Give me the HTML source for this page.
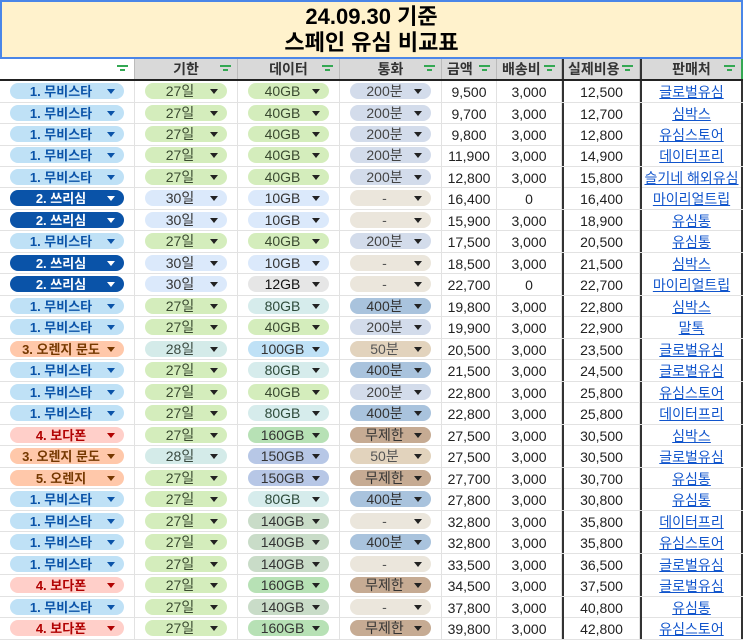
<!DOCTYPE html>
<html><head><meta charset="utf-8"><style>
*{margin:0;padding:0;box-sizing:border-box}
body{width:743px;height:639px;overflow:hidden;background:#fff;font-family:"Liberation Sans","Noto Sans CJK KR",sans-serif;position:relative;color:#222}
.title{position:absolute;left:0;top:0;width:743px;height:59px;background:#fff2cc;border:2px solid #4a86e8;text-align:center;font-weight:bold;font-size:22px;line-height:26px;padding-top:2px;color:#000}
.hd{position:absolute;top:59px;left:0;width:743px;height:22px;border-bottom:2px solid #222}
.hd div{position:absolute;top:0;height:20px;line-height:20px;text-align:center;font-weight:bold;font-size:14px;color:#333;background:#d9d9d9;border-right:1px solid #bbb}
.f{position:absolute;right:6px;top:6px;width:11px;height:9px}
.f:before,.f:after{content:"";position:absolute;left:0;right:0;height:1.5px;background:#34a853}
.f:before{top:0}.f:after{top:4px;left:3px;right:3px}
.r{position:absolute;left:0;width:743px;height:21.5px;border-bottom:1px solid #e2e2e2}
.c{position:absolute;top:0;height:21px;line-height:22px;text-align:center;font-size:14px;border-right:1px solid #e2e2e2}
.a{left:0;width:135px}.b{left:135px;width:103px}.d{left:238px;width:102px}.e{left:340px;width:102px}
.g{left:442px;width:55px}.h{left:497px;width:65px}.i{left:562px;width:78px;border-left:2px solid #333}.j{left:640px;width:103px;border-left:2px solid #333;border-right:2px solid #333}
.p{position:absolute;top:2px;height:16px;line-height:17px;border-radius:8px;text-align:center;padding-right:12px}
.a .p{left:10px;right:10px;font-weight:bold;font-size:13px}
.b .p,.d .p,.e .p{left:10px;right:10px}
.p:after{content:"";position:absolute;right:9px;top:6px;border-left:4px solid transparent;border-right:4px solid transparent;border-top:5px solid #222}
.m{background:#bfe1f6;color:#0a53a8}.m:after{border-top-color:#0a53a8}
.s{background:#0a53a8;color:#fff}.s:after{border-top-color:#fff}
.o{background:#ffc8aa;color:#753800}.o:after{border-top-color:#753800}
.v{background:#ffcfc9;color:#b10202}.v:after{border-top-color:#b10202}
.d27{background:#d4edbc;color:#3a4a30}.d28{background:#d4ebe9;color:#3a4a40}.d30{background:#dbe9fb;color:#333}
.g40{background:#d4edbc;color:#3a4a30}.g10{background:#dbe9fb;color:#333}.g12{background:#e6e6e6;color:#111}.g80{background:#d6ecec;color:#2d4a3a}.g100{background:#bfe1f6;color:#333}.g150{background:#b7c7e6;color:#333}.g160{background:#b7e1b5;color:#333}.g140{background:#c9dcc8;color:#333}
.t200{background:#d3dceb;color:#444}.tn{background:#ebe6dc;color:#555}.t400{background:#a9c3dd;color:#333}.t50{background:#e2d3bd;color:#555}.tu{background:#c6ab93;color:#333}
.j a{color:#1155cc;text-decoration:underline}
</style></head><body>
<div class="title">24.09.30 기준<br>스페인 유심 비교표</div>
<div class="hd">
<div style="left:0;width:135px;background:#fff"><span class="f"></span></div>
<div style="left:135px;width:103px">기한<span class="f"></span></div>
<div style="left:238px;width:102px">데이터<span class="f"></span></div>
<div style="left:340px;width:102px">통화<span class="f"></span></div>
<div style="left:442px;width:55px;text-align:left;padding-left:5px">금액<span class="f"></span></div>
<div style="left:497px;width:65px;text-align:left;padding-left:5px">배송비<span class="f"></span></div>
<div style="left:562px;width:78px;border-left:2px solid #333;text-align:left;padding-left:4px">실제비용<span class="f"></span></div>
<div style="left:640px;width:103px;border-left:2px solid #333;border-right:2px solid #34a853">판매처<span class="f"></span></div>
</div>

<div class="r" style="top:81px"><div class="c a"><div class="p m">1. 무비스타</div></div><div class="c b"><div class="p d27">27일</div></div><div class="c d"><div class="p g40">40GB</div></div><div class="c e"><div class="p t200">200분</div></div><div class="c g">9,500</div><div class="c h">3,000</div><div class="c i">12,500</div><div class="c j"><a>글로벌유심</a></div></div>
<div class="r" style="top:102.5px"><div class="c a"><div class="p m">1. 무비스타</div></div><div class="c b"><div class="p d27">27일</div></div><div class="c d"><div class="p g40">40GB</div></div><div class="c e"><div class="p t200">200분</div></div><div class="c g">9,700</div><div class="c h">3,000</div><div class="c i">12,700</div><div class="c j"><a>심박스</a></div></div>
<div class="r" style="top:124px"><div class="c a"><div class="p m">1. 무비스타</div></div><div class="c b"><div class="p d27">27일</div></div><div class="c d"><div class="p g40">40GB</div></div><div class="c e"><div class="p t200">200분</div></div><div class="c g">9,800</div><div class="c h">3,000</div><div class="c i">12,800</div><div class="c j"><a>유심스토어</a></div></div>
<div class="r" style="top:145.4px"><div class="c a"><div class="p m">1. 무비스타</div></div><div class="c b"><div class="p d27">27일</div></div><div class="c d"><div class="p g40">40GB</div></div><div class="c e"><div class="p t200">200분</div></div><div class="c g">11,900</div><div class="c h">3,000</div><div class="c i">14,900</div><div class="c j"><a>데이터프리</a></div></div>
<div class="r" style="top:166.9px"><div class="c a"><div class="p m">1. 무비스타</div></div><div class="c b"><div class="p d27">27일</div></div><div class="c d"><div class="p g40">40GB</div></div><div class="c e"><div class="p t200">200분</div></div><div class="c g">12,800</div><div class="c h">3,000</div><div class="c i">15,800</div><div class="c j"><a>슬기네 해외유심</a></div></div>
<div class="r" style="top:188.4px"><div class="c a"><div class="p s">2. 쓰리심</div></div><div class="c b"><div class="p d30">30일</div></div><div class="c d"><div class="p g10">10GB</div></div><div class="c e"><div class="p tn">-</div></div><div class="c g">16,400</div><div class="c h">0</div><div class="c i">16,400</div><div class="c j"><a>마이리얼트립</a></div></div>
<div class="r" style="top:209.9px"><div class="c a"><div class="p s">2. 쓰리심</div></div><div class="c b"><div class="p d30">30일</div></div><div class="c d"><div class="p g10">10GB</div></div><div class="c e"><div class="p tn">-</div></div><div class="c g">15,900</div><div class="c h">3,000</div><div class="c i">18,900</div><div class="c j"><a>유심통</a></div></div>
<div class="r" style="top:231.4px"><div class="c a"><div class="p m">1. 무비스타</div></div><div class="c b"><div class="p d27">27일</div></div><div class="c d"><div class="p g40">40GB</div></div><div class="c e"><div class="p t200">200분</div></div><div class="c g">17,500</div><div class="c h">3,000</div><div class="c i">20,500</div><div class="c j"><a>유심통</a></div></div>
<div class="r" style="top:252.8px"><div class="c a"><div class="p s">2. 쓰리심</div></div><div class="c b"><div class="p d30">30일</div></div><div class="c d"><div class="p g10">10GB</div></div><div class="c e"><div class="p tn">-</div></div><div class="c g">18,500</div><div class="c h">3,000</div><div class="c i">21,500</div><div class="c j"><a>심박스</a></div></div>
<div class="r" style="top:274.3px"><div class="c a"><div class="p s">2. 쓰리심</div></div><div class="c b"><div class="p d30">30일</div></div><div class="c d"><div class="p g12">12GB</div></div><div class="c e"><div class="p tn">-</div></div><div class="c g">22,700</div><div class="c h">0</div><div class="c i">22,700</div><div class="c j"><a>마이리얼트립</a></div></div>
<div class="r" style="top:295.8px"><div class="c a"><div class="p m">1. 무비스타</div></div><div class="c b"><div class="p d27">27일</div></div><div class="c d"><div class="p g80">80GB</div></div><div class="c e"><div class="p t400">400분</div></div><div class="c g">19,800</div><div class="c h">3,000</div><div class="c i">22,800</div><div class="c j"><a>심박스</a></div></div>
<div class="r" style="top:317.3px"><div class="c a"><div class="p m">1. 무비스타</div></div><div class="c b"><div class="p d27">27일</div></div><div class="c d"><div class="p g40">40GB</div></div><div class="c e"><div class="p t200">200분</div></div><div class="c g">19,900</div><div class="c h">3,000</div><div class="c i">22,900</div><div class="c j"><a>말톡</a></div></div>
<div class="r" style="top:338.8px"><div class="c a"><div class="p o">3. 오렌지 문도</div></div><div class="c b"><div class="p d28">28일</div></div><div class="c d"><div class="p g100">100GB</div></div><div class="c e"><div class="p t50">50분</div></div><div class="c g">20,500</div><div class="c h">3,000</div><div class="c i">23,500</div><div class="c j"><a>글로벌유심</a></div></div>
<div class="r" style="top:360.2px"><div class="c a"><div class="p m">1. 무비스타</div></div><div class="c b"><div class="p d27">27일</div></div><div class="c d"><div class="p g80">80GB</div></div><div class="c e"><div class="p t400">400분</div></div><div class="c g">21,500</div><div class="c h">3,000</div><div class="c i">24,500</div><div class="c j"><a>글로벌유심</a></div></div>
<div class="r" style="top:381.7px"><div class="c a"><div class="p m">1. 무비스타</div></div><div class="c b"><div class="p d27">27일</div></div><div class="c d"><div class="p g40">40GB</div></div><div class="c e"><div class="p t200">200분</div></div><div class="c g">22,800</div><div class="c h">3,000</div><div class="c i">25,800</div><div class="c j"><a>유심스토어</a></div></div>
<div class="r" style="top:403.2px"><div class="c a"><div class="p m">1. 무비스타</div></div><div class="c b"><div class="p d27">27일</div></div><div class="c d"><div class="p g80">80GB</div></div><div class="c e"><div class="p t400">400분</div></div><div class="c g">22,800</div><div class="c h">3,000</div><div class="c i">25,800</div><div class="c j"><a>데이터프리</a></div></div>
<div class="r" style="top:424.7px"><div class="c a"><div class="p v">4. 보다폰</div></div><div class="c b"><div class="p d27">27일</div></div><div class="c d"><div class="p g160">160GB</div></div><div class="c e"><div class="p tu">무제한</div></div><div class="c g">27,500</div><div class="c h">3,000</div><div class="c i">30,500</div><div class="c j"><a>심박스</a></div></div>
<div class="r" style="top:446.2px"><div class="c a"><div class="p o">3. 오렌지 문도</div></div><div class="c b"><div class="p d28">28일</div></div><div class="c d"><div class="p g150">150GB</div></div><div class="c e"><div class="p t50">50분</div></div><div class="c g">27,500</div><div class="c h">3,000</div><div class="c i">30,500</div><div class="c j"><a>글로벌유심</a></div></div>
<div class="r" style="top:467.6px"><div class="c a"><div class="p o">5. 오렌지</div></div><div class="c b"><div class="p d27">27일</div></div><div class="c d"><div class="p g150">150GB</div></div><div class="c e"><div class="p tu">무제한</div></div><div class="c g">27,700</div><div class="c h">3,000</div><div class="c i">30,700</div><div class="c j"><a>유심통</a></div></div>
<div class="r" style="top:489.1px"><div class="c a"><div class="p m">1. 무비스타</div></div><div class="c b"><div class="p d27">27일</div></div><div class="c d"><div class="p g80">80GB</div></div><div class="c e"><div class="p t400">400분</div></div><div class="c g">27,800</div><div class="c h">3,000</div><div class="c i">30,800</div><div class="c j"><a>유심통</a></div></div>
<div class="r" style="top:510.6px"><div class="c a"><div class="p m">1. 무비스타</div></div><div class="c b"><div class="p d27">27일</div></div><div class="c d"><div class="p g140">140GB</div></div><div class="c e"><div class="p tn">-</div></div><div class="c g">32,800</div><div class="c h">3,000</div><div class="c i">35,800</div><div class="c j"><a>데이터프리</a></div></div>
<div class="r" style="top:532.1px"><div class="c a"><div class="p m">1. 무비스타</div></div><div class="c b"><div class="p d27">27일</div></div><div class="c d"><div class="p g140">140GB</div></div><div class="c e"><div class="p t400">400분</div></div><div class="c g">32,800</div><div class="c h">3,000</div><div class="c i">35,800</div><div class="c j"><a>유심스토어</a></div></div>
<div class="r" style="top:553.6px"><div class="c a"><div class="p m">1. 무비스타</div></div><div class="c b"><div class="p d27">27일</div></div><div class="c d"><div class="p g140">140GB</div></div><div class="c e"><div class="p tn">-</div></div><div class="c g">33,500</div><div class="c h">3,000</div><div class="c i">36,500</div><div class="c j"><a>글로벌유심</a></div></div>
<div class="r" style="top:575px"><div class="c a"><div class="p v">4. 보다폰</div></div><div class="c b"><div class="p d27">27일</div></div><div class="c d"><div class="p g160">160GB</div></div><div class="c e"><div class="p tu">무제한</div></div><div class="c g">34,500</div><div class="c h">3,000</div><div class="c i">37,500</div><div class="c j"><a>글로벌유심</a></div></div>
<div class="r" style="top:596.5px"><div class="c a"><div class="p m">1. 무비스타</div></div><div class="c b"><div class="p d27">27일</div></div><div class="c d"><div class="p g140">140GB</div></div><div class="c e"><div class="p tn">-</div></div><div class="c g">37,800</div><div class="c h">3,000</div><div class="c i">40,800</div><div class="c j"><a>유심통</a></div></div>
<div class="r" style="top:618px"><div class="c a"><div class="p v">4. 보다폰</div></div><div class="c b"><div class="p d27">27일</div></div><div class="c d"><div class="p g160">160GB</div></div><div class="c e"><div class="p tu">무제한</div></div><div class="c g">39,800</div><div class="c h">3,000</div><div class="c i">42,800</div><div class="c j"><a>유심스토어</a></div></div>
</body></html>
